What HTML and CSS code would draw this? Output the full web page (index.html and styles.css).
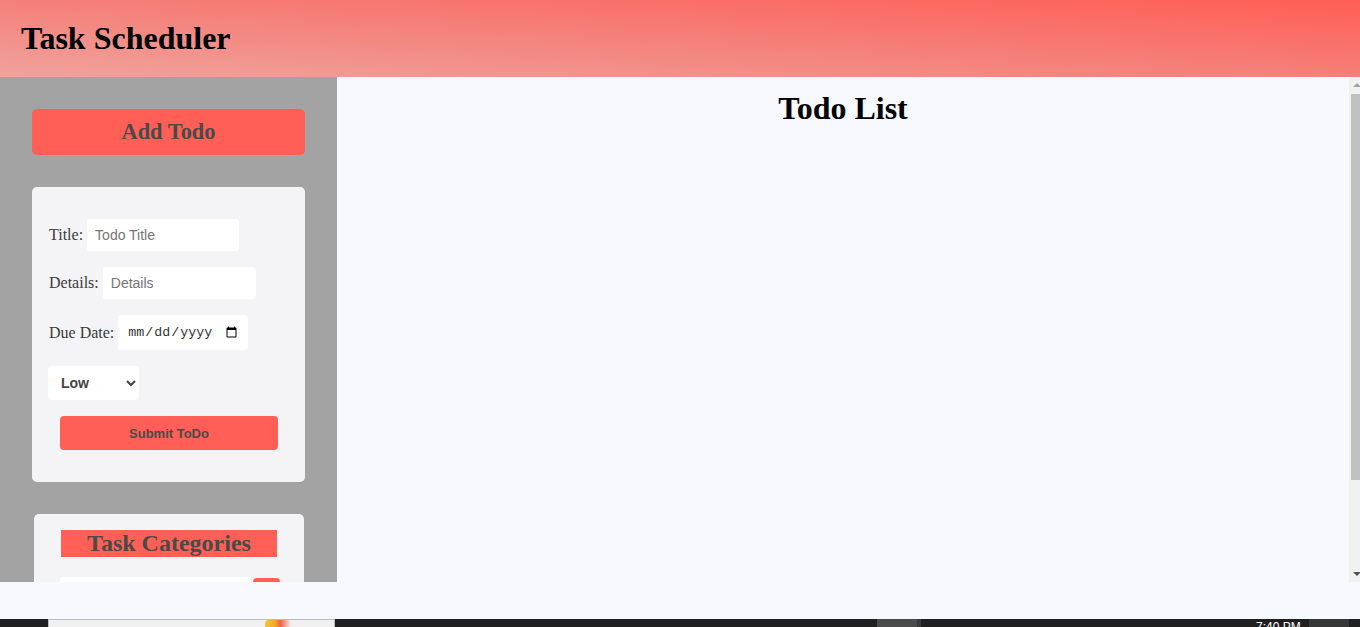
FILE: index.html
```html
<!DOCTYPE html>
<html lang="en">
<head>
<meta charset="utf-8">
<title>Task Scheduler</title>
<link rel="stylesheet" href="styles.css">
</head>
<body>
<div class="screen">
  <header class="topbar">
    <h1 class="brand">Task Scheduler</h1>
  </header>
  <div class="workspace">
    <aside class="sidebar">
      <button class="add-btn" type="button">Add Todo</button>
      <form class="card todo-form">
        <div class="field">
          <label class="field-label" for="title">Title:</label>
          <input class="text-input w-title" id="title" type="text" placeholder="Todo Title">
        </div>
        <div class="field">
          <label class="field-label" for="details">Details:</label>
          <input class="text-input w-details" id="details" type="text" placeholder="Details">
        </div>
        <div class="field">
          <label class="field-label" for="due">Due Date:</label>
          <input class="date-input" id="due" type="date">
        </div>
        <div class="field">
          <select class="priority">
            <option>Low</option>
            <option>Medium</option>
            <option>High</option>
          </select>
        </div>
        <button class="submit-btn" type="button">Submit ToDo</button>
      </form>
      <section class="card categories">
        <h2 class="cat-title">Task Categories</h2>
        <div class="cat-row">
          <input class="cat-input" type="text">
          <button class="cat-btn" type="button"></button>
        </div>
      </section>
    </aside>
    <main class="content">
      <h2 class="list-title">Todo List</h2>
    </main>
    <div class="scrollbar">
      <div class="sb-inner">
        <span class="sb-arrow up"></span>
        <span class="sb-thumb"></span>
        <span class="sb-arrow down"></span>
      </div>
    </div>
  </div>
  <div class="strip"></div>
  <div class="taskbar">
    <div class="tb-window"><span class="tb-icon"></span></div>
    <div class="tb-app"></div>
    <div class="tb-clock">7:40 PM</div>
    <div class="tb-corner"></div>
  </div>
</div>
</body>
</html>
```
FILE: styles.css
```css
* { box-sizing: border-box; }
html, body { margin: 0; padding: 0; }
body { width: 1360px; height: 627px; overflow: hidden; background: #f8f8ff; font-family: "Liberation Serif", "Times New Roman", serif; }

.screen { display: flex; flex-direction: column; width: 1360px; height: 627px; }

.topbar {
  height: 77px;
  flex: none;
  display: flex;
  align-items: center;
  padding-left: 21px;
  background: linear-gradient(to bottom left, #ff5e55 0%, #f4837d 55%, #f0a39c 100%);
}
.brand { margin: 0; font-size: 32px; font-weight: bold; color: #000; line-height: 37px; }

.workspace { height: 505px; flex: none; display: flex; overflow: hidden; }

.sidebar {
  width: 337px;
  flex: none;
  background: #a3a3a3;
  padding: 32px 32px 0;
  overflow: hidden;
  display: flex;
  flex-direction: column;
  gap: 32px;
}
.add-btn {
  flex: none;
  height: 46px;
  width: 100%;
  border: none;
  border-radius: 5px;
  background: #ff5f56;
  color: #4a4a4a;
  font-family: "Liberation Serif", "Times New Roman", serif;
  font-weight: bold;
  font-size: 22.4px;
  padding: 0;
}

.card { background: #f4f4f7; border-radius: 5px; flex: none; }

.todo-form { padding: 32px 16px 32px; display: flex; flex-direction: column; gap: 16px; }
.field { display: flex; align-items: center; gap: 4px; flex: none; }
.field-label { font-size: 16px; color: #3a3a3a; margin-left: 1px; }
.text-input {
  height: 32px;
  border: none;
  border-radius: 3px;
  background: #fff;
  padding: 0 8px;
  font-family: "Liberation Sans", Arial, sans-serif;
  font-size: 14px;
  color: #333;
}
.text-input::placeholder { color: #757575; }
.w-title { width: 152px; }
.w-details { width: 153px; }
.date-input {
  width: 130px;
  height: 35px;
  border: none;
  border-radius: 3px;
  background: #fff;
  padding: 0 8px 0 9px;
  font-family: "Liberation Mono", monospace;
  font-size: 13.333px;
  color: #333;
}
.priority {
  width: 91px;
  height: 34px;
  border: none;
  border-radius: 3px;
  background: #fff;
  padding: 0 8px 0 9px;
  font-family: "Liberation Sans", Arial, sans-serif;
  font-size: 14px;
  font-weight: bold;
  color: #444;
}
.submit-btn {
  flex: none;
  align-self: center;
  width: 218px;
  height: 34px;
  border: none;
  border-radius: 4px;
  background: #ff5f56;
  color: #4a4a4a;
  font-family: "Liberation Sans", Arial, sans-serif;
  font-size: 13px;
  font-weight: bold;
  margin-left: 1px;
}

.categories { margin: 0 1px 0 2px; padding: 16px 0 20px; height: 120px; }
.cat-title {
  margin: 0 auto;
  width: 216px;
  background: #ff5f56;
  color: #4a4a4a;
  text-align: center;
  font-size: 24px;
  line-height: 27px;
}
.cat-row { display: flex; justify-content: center; gap: 4px; margin-top: 20px; margin-left: 1px; }
.cat-input { width: 189px; height: 30px; border: none; border-radius: 3px; background: #fff; }
.cat-btn { width: 27px; height: 30px; border: none; border-radius: 4px; background: #ff5f56; margin-top: 1px; }

.content { flex: 1; background: #f8f8ff; }
.list-title { margin: 13px 0 0; text-align: center; font-size: 32px; font-weight: bold; color: #000; line-height: 37px; }

.scrollbar { width: 11px; flex: none; overflow: hidden; background: #f1f1f1; }
.sb-inner { width: 15px; height: 100%; position: relative; }
.sb-arrow { position: absolute; left: 4px; width: 0; height: 0; border-left: 4px solid transparent; border-right: 4px solid transparent; }
.sb-arrow.up { top: 6px; border-bottom: 4px solid #a3a3a3; }
.sb-arrow.down { bottom: 6px; border-top: 4px solid #505050; }
.sb-thumb { position: absolute; left: 2px; top: 17px; width: 11px; height: 386px; background: #c1c1c1; }

.strip { height: 37px; flex: none; background: #f8f8ff; }

.taskbar { height: 8px; flex: none; background: #202020; display: flex; align-items: flex-start; overflow: hidden; }
.tb-window { width: 287px; height: 8px; margin-left: 48px; background: #f0f0f0; border-top: 1px solid #bcbcbc; border-left: 1px solid #bcbcbc; border-right: 1px solid #bcbcbc; position: relative; }
.tb-icon { position: absolute; left: 216px; top: 0; width: 26px; height: 8px; background: linear-gradient(to right, #f7c33b 0%, #f5a623 40%, #f0604a 60%, #f0f0f0 100%); border-radius: 4px 4px 0 0; }
.tb-app { width: 44px; height: 8px; margin-left: 542px; background: #4b4b4b; border-right: 4px solid #3a3a3a; }
.tb-clock { margin-left: 335px; color: #fff; font-family: "Liberation Sans", Arial, sans-serif; font-size: 12px; line-height: 12px; padding-top: 2px; width: 53px; }
.tb-corner { width: 40px; height: 8px; background: #363636; }
```
